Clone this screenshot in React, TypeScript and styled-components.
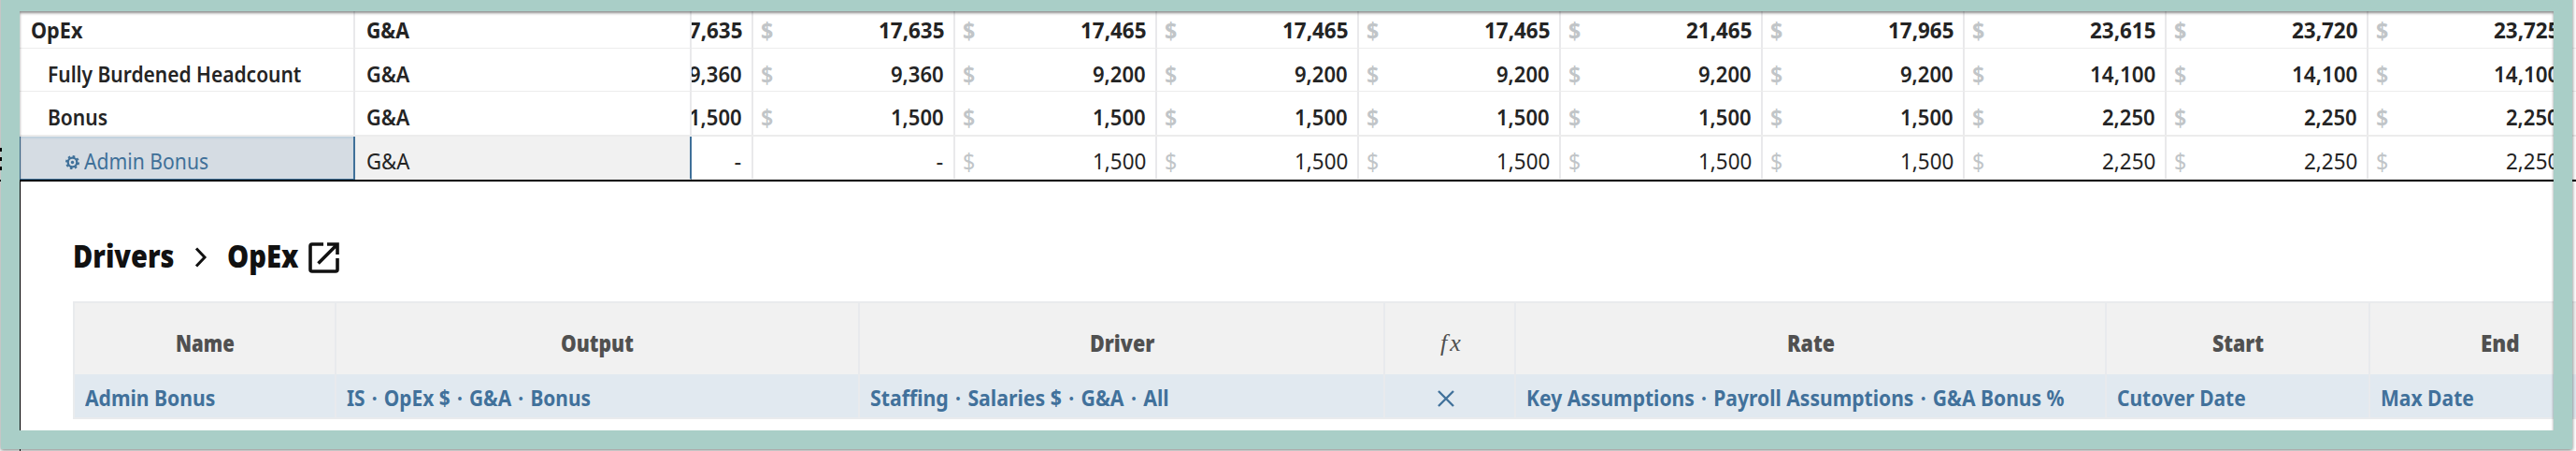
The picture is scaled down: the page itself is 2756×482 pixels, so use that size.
import React, { useLayoutEffect, useRef, useState } from 'react';
import styled, { createGlobalStyle } from 'styled-components';

const GlobalStyle = createGlobalStyle`
  * { box-sizing: border-box; }
  html, body { margin: 0; background: #fff; }
  body { font-family: "Noto Sans", "Open Sans", sans-serif; }
`;

const Page = styled.div`
  position: relative;
  width: 2756px;
  height: 482px;
  overflow: hidden;
  background: #fff;
`;

const Frame = styled.div`
  position: absolute;
  z-index: 2;
  top: -8px;
  left: 1px;
  width: 2751px;
  height: 488px;
  border: 20px solid #a9cec7;
  box-shadow: 0 1px 4px rgba(0, 0, 0, 0.55), inset 0 2px 3px rgba(0, 0, 0, 0.45);
  pointer-events: none;
`;

const RowHandle = styled.div`
  position: absolute;
  z-index: 3;
  left: 0;
  top: 158px;
  width: 2px;
  height: 24px;
  background: repeating-linear-gradient(#000 0 4px, transparent 4px 10px);
`;

const FitBox = styled.span<{ $w: number }>`
  display: block;
  flex: none;
  width: ${(p) => p.$w}px;
  white-space: nowrap;
`;
const FitInner = styled.span`
  display: inline-block;
  transform-origin: 0 50%;
`;

/* Condenses a label horizontally so that it fills the given width. */
function Fit({ w, children }: { w: number; children: React.ReactNode }) {
  const ref = useRef<HTMLSpanElement>(null);
  const [scale, setScale] = useState(1);
  useLayoutEffect(() => {
    if (ref.current) setScale(w / ref.current.offsetWidth);
  }, [w]);
  return (
    <FitBox $w={w}>
      <FitInner ref={ref} style={{ transform: `scaleX(${scale})` }}>{children}</FitInner>
    </FitBox>
  );
}

const Sheet = styled.div`
  display: flex;
  flex-direction: column;
  height: 194px;
  padding: 5px 0 0 21px;
  border-bottom: 2px solid #000;
`;

const SheetRow = styled.div<{ $h: number; $weight: number; $rule: number; $lift: number }>`
  display: flex;
  flex: none;
  height: ${(p) => p.$h}px;
  font-size: 24px;
  line-height: 32px;
  font-weight: ${(p) => p.$weight};
  color: #242424;
  --lift: ${(p) => p.$lift}px;
  & > * { border-bottom: ${(p) => p.$rule}px solid #ececec; }
`;

const NameCell = styled.div<{ $indent: number; $active?: boolean }>`
  display: flex;
  flex: none;
  align-items: flex-end;
  width: 359px;
  padding: 0 0 var(--lift) ${(p) => p.$indent}px;
  border-right: 2px solid ${(p) => (p.$active ? '#3f7099' : '#e9e9eb')};
  ${(p) => p.$active && `
    background: #d5dce3;
    color: #3f7099;
    border-left: 1px solid #3f7099;
    border-bottom-color: #3f7099;
    box-shadow: inset 0 2px 2px #c0d0de;
  `}
`;

const DeptCell = styled.div<{ $active?: boolean }>`
  display: flex;
  flex: none;
  align-items: flex-end;
  width: 360px;
  padding: 0 0 var(--lift) 12px;
  border-right: 2px solid ${(p) => (p.$active ? '#3f7099' : '#e9e9eb')};
  background: ${(p) => (p.$active ? '#f1f1f1' : '#fff')};
`;

const Values = styled.div`
  display: flex;
  flex: 1;
  min-width: 0;
  overflow: hidden;
`;

const ValueCell = styled.div<{ $first?: boolean }>`
  display: flex;
  flex: none;
  justify-content: space-between;
  align-items: flex-end;
  width: 216px;
  margin-left: ${(p) => (p.$first ? -150 : 0)}px;
  padding: 0 10.5px var(--lift) 8px;
  border-right: 2px solid #e9e9eb;
`;

const Currency = styled.span`
  font-size: 25px;
  color: #c1c5c8;
`;

const Gear = styled.svg`
  flex: none;
  width: 15px;
  height: 15px;
  margin: 0 5px 7px 0;
`;

const Drivers = styled.section`
  height: 266px;
  margin-left: 21px;
  padding: 51px 0 0 56px;
  border-left: 1px solid #000;
`;

const LowerEdge = styled.div`
  height: 22px;
  margin-left: 21px;
  border-left: 1px solid #000;
`;

const Title = styled.h2`
  display: flex;
  align-items: center;
  height: 57px;
  margin: 0;
  font-size: 33px;
  line-height: 56px;
  font-weight: 900;
  color: #111;
`;

const Chevron = styled.svg`
  width: 14px;
  height: 22px;
  margin: 3px 21px 0 21px;
`;

const OpenIcon = styled.svg`
  width: 33px;
  height: 33px;
  margin: 3px 0 0 11px;
`;

const Table = styled.div`
  width: 2738px;
  margin-top: 20px;
  border: 2px solid #e9ebed;
  border-width: 2px 0 2px 2px;
`;

const TableRow = styled.div<{ $head?: boolean }>`
  display: grid;
  grid-template-columns: 280px 560px 562px 140px 632px 282px 280px;
  height: ${(p) => (p.$head ? 76 : 46)}px;
  background: ${(p) => (p.$head ? '#f1f1f1' : '#e1e9f0')};
  color: ${(p) => (p.$head ? '#505050' : '#41719b')};
  font-weight: ${(p) => (p.$head ? 900 : 700)};
  font-size: 24px;
  line-height: 32px;
`;

const Cell = styled.div<{ $center?: boolean }>`
  display: flex;
  align-items: flex-end;
  justify-content: ${(p) => (p.$center ? 'center' : 'flex-start')};
  padding: 0 2px 5px ${(p) => (p.$center ? 0 : 11)}px;
  border-right: 2px solid #e8eaed;
`;
const HeadCell = styled(Cell)`
  padding: 0 0 17px;
`;

const Fx = styled.span`
  padding-left: 5px;
  font: italic 400 26px/32px "Liberation Serif", serif;
  letter-spacing: 3px;
`;

const Dot = styled.span`
  margin: 0 2px;
`;

const Times = styled.svg`
  width: 18px;
  height: 18px;
  margin: 0 6px 6px 0;
`;

type Line = {
  name: string; nameW: number; indent: number; h: number; weight: number;
  rule: number; lift: number; active?: boolean; values: string[];
};

const lines: Line[] = [
  { name: 'OpEx', nameW: 55, indent: 12, h: 47, weight: 700, rule: 1, lift: 3,
    values: ['17,635', '17,635', '17,465', '17,465', '17,465', '21,465', '17,965', '23,615', '23,720', '23,725'] },
  { name: 'Fully Burdened Headcount', nameW: 271, indent: 30, h: 46, weight: 600, rule: 1, lift: 2,
    values: ['9,360', '9,360', '9,200', '9,200', '9,200', '9,200', '9,200', '14,100', '14,100', '14,100'] },
  { name: 'Bonus', nameW: 64, indent: 30, h: 48, weight: 600, rule: 2, lift: 3,
    values: ['1,500', '1,500', '1,500', '1,500', '1,500', '1,500', '1,500', '2,250', '2,250', '2,250'] },
  { name: 'Admin Bonus', nameW: 133, indent: 48, h: 46, weight: 400, rule: 1, lift: 3, active: true,
    values: ['-', '-', '1,500', '1,500', '1,500', '1,500', '1,500', '2,250', '2,250', '2,250'] },
];

const numberWidth = (v: string) => (v === '-' ? 8 : v.length === 6 ? 70 : 57);

const heads: [string, number][] = [
  ['Name', 63], ['Output', 78], ['Driver', 69], ['fx', 0], ['Rate', 51], ['Start', 55], ['End', 42],
];
const driver: [string, number][] = [
  ['Admin Bonus', 139], ['IS · OpEx $ · G&A · Bonus', 261], ['Staffing · Salaries $ · G&A · All', 320],
  ['×', 0], ['Key Assumptions · Payroll Assumptions · G&A Bonus %', 576], ['Cutover Date', 138], ['Max Date', 100],
];

function Path({ text }: { text: string }) {
  return (
    <>
      {text.split(' · ').map((part, i) => (
        <React.Fragment key={i}>
          {i > 0 && <> <Dot>·</Dot> </>}
          {part}
        </React.Fragment>
      ))}
    </>
  );
}

export default function App() {
  return (
    <Page>
      <GlobalStyle />
      <Sheet>
        {lines.map((l) => (
          <SheetRow key={l.name} $h={l.h} $weight={l.weight} $rule={l.rule} $lift={l.lift}>
            <NameCell $indent={l.indent} $active={l.active}>
              {l.active && (
                <Gear viewBox="0 0 16 16" fill="none" stroke="currentColor">
                  <circle cx="8" cy="8" r="5.1" strokeWidth="2.4" />
                  <circle cx="8" cy="8" r="1.8" fill="currentColor" stroke="none" />
                  <circle cx="8" cy="8" r="7" strokeWidth="2" strokeDasharray="2.75 2.75" />
                </Gear>
              )}
              <Fit w={l.nameW}>{l.name}</Fit>
            </NameCell>
            <DeptCell $active={l.active}><Fit w={46}>G&amp;A</Fit></DeptCell>
            <Values>
              {l.values.map((v, i) => (
                <ValueCell key={i} $first={i === 0}>
                  <Currency>{v !== '-' && i > 0 && <Fit w={13}>$</Fit>}</Currency>
                  <Fit w={numberWidth(v)}>{v}</Fit>
                </ValueCell>
              ))}
            </Values>
          </SheetRow>
        ))}
      </Sheet>
      <Drivers>
        <Title>
          <Fit w={109}>Drivers</Fit>
          <Chevron viewBox="0 0 14 22" fill="none" stroke="currentColor" strokeWidth="3">
            <path d="M2 1.5 11 11 2 20.5" />
          </Chevron>
          <Fit w={76}>OpEx</Fit>
          <OpenIcon viewBox="0 0 33 33" fill="none" stroke="currentColor" strokeWidth="3.6">
            <path d="M16 2H4Q2 2 2 4V29Q2 31 4 31H29Q31 31 31 29V17" />
            <path d="M20 2H31V13M31 2 10.5 22.5" />
          </OpenIcon>
        </Title>
        <Table>
          <TableRow $head>
            {heads.map(([t, w]) => (
              <HeadCell key={t} $center>{t === 'fx' ? <Fx>fx</Fx> : <Fit w={w}>{t}</Fit>}</HeadCell>
            ))}
          </TableRow>
          <TableRow>
            {driver.map(([t, w]) => (
              <Cell key={t} $center={t === '×'}>
                {t === '×' ? (
                  <Times viewBox="0 0 18 18" fill="none" stroke="currentColor" strokeWidth="2.4">
                    <path d="M1 1 17 17M17 1 1 17" />
                  </Times>
                ) : <Fit w={w}><Path text={t} /></Fit>}
              </Cell>
            ))}
          </TableRow>
        </Table>
      </Drivers>
      <LowerEdge />
      <Frame />
      <RowHandle />
    </Page>
  );
}
